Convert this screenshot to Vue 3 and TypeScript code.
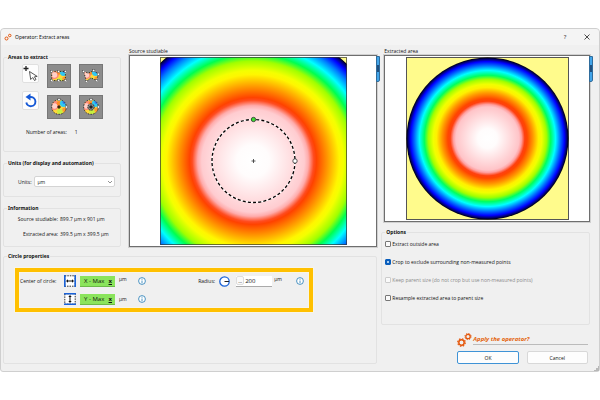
<script setup lang="ts">
import { ref } from 'vue'

interface Stop {
  at: number
  color: string
}

interface Option {
  id: string
  label: string
  checked: boolean
  disabled: boolean
}

const sourceStops: Stop[] = [
  { at: 0, color: '#ffffff' },
  { at: 12, color: '#fffcfc' },
  { at: 38, color: '#ffccd0' },
  { at: 41, color: '#ffacac' },
  { at: 45, color: '#ff4c20' },
  { at: 47, color: '#ff4200' },
  { at: 55, color: '#ff9600' },
  { at: 64, color: '#fff600' },
  { at: 67, color: '#f4ff00' },
  { at: 74, color: '#a0ff00' },
  { at: 79, color: '#00ff50' },
  { at: 85, color: '#00ffff' },
  { at: 91, color: '#0080ff' },
  { at: 96, color: '#0000ff' },
  { at: 99, color: '#000060' },
  { at: 100, color: '#000000' },
]

const resultStops: Stop[] = [
  { at: 0, color: '#ffffff' },
  { at: 12, color: '#fffcfc' },
  { at: 39, color: '#ffc4c8' },
  { at: 42, color: '#ffa0a0' },
  { at: 46, color: '#ff4010' },
  { at: 49, color: '#ff4600' },
  { at: 56, color: '#ff9600' },
  { at: 63, color: '#fff000' },
  { at: 67, color: '#f0ff00' },
  { at: 73, color: '#a0ff00' },
  { at: 78, color: '#00ff60' },
  { at: 84, color: '#00ffff' },
  { at: 90, color: '#0070ff' },
  { at: 95, color: '#0000ff' },
  { at: 98, color: '#000070' },
  { at: 100, color: '#000000' },
]

const options = ref<Option[]>([
  { id: 'outside', label: 'Extract outside area', checked: false, disabled: false },
  { id: 'crop', label: 'Crop to exclude surrounding non-measured points', checked: true, disabled: false },
  { id: 'keep', label: 'Keep parent size (do not crop but use non-measured points)', checked: false, disabled: true },
  { id: 'resample', label: 'Resample extracted area to parent size', checked: false, disabled: false },
])

const shapes = [
  { id: 'rect', label: 'Rectangle', d: 'M4 7H19V17H4Z', dots: [[4, 7], [11.5, 7], [19, 7], [4, 17], [11.5, 17], [19, 17]] },
  { id: 'poly', label: 'Polygon', d: 'M4 7L9 9L15 6L20 10L18 17L12 14L7 18Z', dots: [[4, 7], [15, 6], [20, 10], [18, 17], [7, 18]] },
  { id: 'circle', label: 'Circle', d: 'M12 4A8 8 0 1 1 12 20A8 8 0 1 1 12 4Z', dots: [[12, 4], [20, 12]] },
  { id: 'ring', label: 'Ring', d: 'M12 4A8 8 0 1 1 12 20A8 8 0 1 1 12 4Z', dots: [[12, 4], [20, 12]] },
]

const units = ref('µm')
const radius = ref('200')
</script>

<template>
  <main class="window">
    <header class="titlebar">
      <svg class="title-icon" viewBox="0 0 16 16" aria-hidden="true">
        <circle cx="5" cy="11" r="3" /><circle cx="11.500" cy="5" r="2.500" />
      </svg>
      <h1>Operator: Extract areas</h1>
      <button class="plain help" type="button">?</button>
      <button class="plain" type="button" aria-label="Close">
        <svg class="close" viewBox="0 0 8 8"><path d="M1.500 1.500L6.500 6.500M6.500 1.500L1.500 6.500" /></svg>
      </button>
    </header>

    <div class="body">
      <div class="left">
        <div class="side">
          <fieldset class="areas">
            <legend>Areas to extract</legend>
            <div class="tools">
              <div class="tool-col">
                <button class="tool" type="button" aria-label="Select area">
                  <svg viewBox="0 0 15 17">
                    <path d="M3 1V6M.5 3.500H5.500" stroke="#222" stroke-width="1.300" />
                    <path d="M6.500 6.500L7.700 14.500L9.700 12.500L11.500 15.500L13 14.500L11.400 11.800L14.200 11.400Z" fill="#fff" stroke="#444" stroke-width=".9" />
                  </svg>
                </button>
                <button class="tool" type="button" aria-label="Reset">
                  <svg viewBox="0 0 15 17">
                    <path d="M6 5H8A4.600 4.600 0 1 1 3.300 10.500" fill="none" stroke="#1558d6" stroke-width="1.900" />
                    <path d="M2.500 5L7.500 1.500V8.500Z" fill="#1558d6" />
                  </svg>
                </button>
              </div>
              <div class="shape-grid">
                <button v-for="s in shapes" :key="s.id" class="shape" type="button" :aria-label="s.label">
                  <svg viewBox="0 0 24 24">
                    <defs>
                      <clipPath :id="'clip-' + s.id"><path :d="s.d" /></clipPath>
                    </defs>
                    <g :clip-path="`url(#clip-${s.id})`">
                      <rect width="24" height="24" fill="#ffd83a" />
                      <circle cx="6.500" cy="10" r="5.500" fill="#ff8a78" />
                      <circle cx="7" cy="11" r="3" fill="#ffd0c8" />
                      <circle cx="12" cy="8" r="2.500" fill="#ff8c28" />
                      <circle cx="17" cy="8" r="4" fill="#30c8f0" />
                      <circle cx="18" cy="6.500" r="2.200" fill="#3070f0" />
                      <circle cx="13" cy="17" r="3" fill="#c8f040" />
                      <circle cx="18" cy="15" r="2.500" fill="#ff9a30" />
                    </g>
                    <path :d="s.d" fill="none" stroke="#222" stroke-dasharray="1.500 1.500" />
                    <circle v-if="s.id === 'ring'" cx="12" cy="12" r="3.500" fill="#8c8c8c" stroke="#222" stroke-dasharray="2 1" />
                    <path v-if="s.id === 'circle' || s.id === 'ring'" d="M12 10V14M10 12H14" stroke="#000" stroke-width="1.200" />
                    <rect v-for="([x, y], i) in s.dots" :key="i" :x="x - 1.2" :y="y - 1.2" width="2.400" height="2.400" fill="#fff" stroke="#444" stroke-width=".5" />
                  </svg>
                </button>
              </div>
            </div>
            <p class="count"><span>Number of areas:</span><span>1</span></p>
          </fieldset>

          <fieldset class="units">
            <legend>Units (for display and automation)</legend>
            <div class="unit-row">
              <label for="units">Units:</label>
              <div class="select-wrap">
                <select id="units" v-model="units"><option>µm</option></select>
                <svg class="chevron" viewBox="0 0 6 4"><path d="M1 1L3 3L5 1" /></svg>
              </div>
            </div>
          </fieldset>

          <fieldset class="info">
            <legend>Information</legend>
            <dl>
              <dt>Source studiable:</dt><dd>899.7 µm x 901 µm</dd>
              <dt>Extracted area:</dt><dd>399.5 µm x 399.5 µm</dd>
            </dl>
          </fieldset>
        </div>

        <section class="source">
          <h2>Source studiable</h2>
          <div class="panel">
            <svg class="map" viewBox="0 0 187 188" role="img" aria-label="Source studiable">
              <defs>
                <radialGradient id="source-heat" gradientUnits="userSpaceOnUse" cx="93" cy="104" r="135">
                  <stop v-for="s in sourceStops" :key="s.at" :offset="s.at / 100" :stop-color="s.color" />
                </radialGradient>
              </defs>
              <rect width="187" height="188" fill="#fffb8c" />
              <circle cx="93" cy="104" r="135" fill="url(#source-heat)" />
              <rect x=".5" y=".5" width="186" height="187" fill="none" stroke="#333" stroke-opacity=".7" />
              <circle cx="93.500" cy="104" r="41.500" fill="none" stroke="#fff" stroke-width="1.200" />
              <circle cx="93.500" cy="104" r="41.500" fill="none" stroke="#000" stroke-width="1.300" stroke-dasharray="3 2.210" />
              <path d="M93.500 102V106M91.500 104H95.500" stroke="#333" stroke-width=".8" />
              <circle cx="93.500" cy="62.500" r="2.200" fill="#3edc32" stroke="#333" stroke-width=".8" />
              <circle cx="135" cy="104" r="2.200" fill="#fff" stroke="#333" stroke-width=".8" />
            </svg>
            <span class="tab"></span>
          </div>
        </section>

        <fieldset class="circle-props">
          <legend>Circle properties</legend>
          <div class="highlight">
            <div class="center-fields">
              <span class="field-label">Center of circle:</span>
              <template v-for="axis in ['X', 'Y']" :key="axis">
                <svg class="axis-icon" :class="{ second: axis === 'Y' }" viewBox="0 0 12 12" aria-hidden="true">
                  <rect x=".8" y=".8" width="10.400" height="10.400" fill="#fff" stroke="#333" stroke-dasharray="1.500 1" />
                  <template v-if="axis === 'X'">
                    <path d="M.8 0V12M11.200 0V12" stroke="#1a62d8" stroke-width="1.600" />
                    <path d="M3 6H9" stroke="#111" /><path d="M2 6L4 4.300V7.700ZM10 6L8 4.300V7.700Z" fill="#111" />
                  </template>
                  <template v-else>
                    <path d="M0 .8H12M0 11.200H12" stroke="#1a62d8" stroke-width="1.600" />
                    <path d="M6 3V9" stroke="#111" /><path d="M6 2L4.300 4H7.700ZM6 10L4.300 8H7.700Z" fill="#111" />
                  </template>
                </svg>
                <button class="chip" type="button"><span>{{ axis }} - Max</span><b>x</b></button>
                <span class="unit" :class="{ middle: axis === 'Y' }">µm</span>
                <svg class="info-icon" viewBox="0 0 8 8" aria-hidden="true">
                  <circle cx="4" cy="4" r="3.400" /><path d="M4 3.500V6.200M4 1.800V2.700" />
                </svg>
              </template>
            </div>
            <div class="radius-fields">
              <label for="radius">Radius:</label>
              <svg class="radius-icon" viewBox="0 0 11 11" aria-hidden="true">
                <circle cx="5.500" cy="5.500" r="4.700" fill="#fff" stroke="#1a62d8" stroke-width="1.300" />
                <path d="M5.500 5.500H10" stroke="#222" />
              </svg>
              <div class="number">
                <button type="button" aria-label="More">...</button>
                <input id="radius" v-model="radius" type="text" />
              </div>
              <span class="unit">µm</span>
              <svg class="info-icon" viewBox="0 0 8 8" aria-hidden="true">
                <circle cx="4" cy="4" r="3.400" /><path d="M4 3.500V6.200M4 1.800V2.700" />
              </svg>
            </div>
          </div>
        </fieldset>
      </div>

      <div class="right">
        <section class="result">
          <h2>Extracted area</h2>
          <div class="panel">
            <svg class="map" viewBox="0 0 163 163" role="img" aria-label="Extracted area">
              <defs>
                <radialGradient id="result-heat" gradientUnits="userSpaceOnUse" cx="81.500" cy="81.500" r="81">
                  <stop v-for="s in resultStops" :key="s.at" :offset="s.at / 100" :stop-color="s.color" />
                </radialGradient>
              </defs>
              <rect x=".5" y=".5" width="162" height="162" fill="#fffb8c" stroke="#555" />
              <circle cx="81.500" cy="81.500" r="81" fill="url(#result-heat)" />
            </svg>
            <span class="tab"></span>
          </div>
        </section>

        <fieldset class="options">
          <legend>Options</legend>
          <label v-for="o in options" :key="o.id" class="check" :class="{ off: o.disabled }">
            <input v-model="o.checked" type="checkbox" :disabled="o.disabled" />
            <span>{{ o.label }}</span>
          </label>
        </fieldset>

        <footer class="apply">
          <div class="question">
            <svg class="gears" viewBox="0 0 15 14" aria-hidden="true">
              <g fill="none" stroke="#e4570c">
                <circle cx="4.500" cy="9.500" r="2.700" stroke-width="1.500" />
                <circle cx="4.500" cy="9.500" r="3.800" stroke-width="1.200" stroke-dasharray="1.490 1.490" />
                <circle cx="11" cy="3.500" r="2.200" stroke-width="1.300" />
                <circle cx="11" cy="3.500" r="3.100" stroke-width="1" stroke-dasharray="1.220 1.220" />
              </g>
            </svg>
            <p>Apply the operator?</p>
          </div>
          <div class="actions">
            <button class="ok" type="button">OK</button>
            <button type="button">Cancel</button>
          </div>
        </footer>
      </div>
      <svg class="grip" viewBox="0 0 5 5" aria-hidden="true"><path d="M4 0h1v5H0V4h2V2h2z" /></svg>
    </div>
  </main>
</template>

<style>
body {
  margin: 0;
  background: #fff;
}
</style>

<style scoped>
* {
  box-sizing: border-box;
}

.window {
  position: relative;
  margin-top: 28px;
  border: 1px solid #cfcfcf;
  border-radius: 4px 4px 3px 3px;
  background: #f0f0f0;
  color: #111;
  font: 5px/8px "Open Sans", "Noto Sans", sans-serif;
}

svg {
  display: block;
}

button,
input,
select {
  margin: 0;
  padding: 0;
  color: inherit;
  font: inherit;
}

h1,
h2,
p,
dl,
dd {
  margin: 0;
  font: inherit;
}

.titlebar {
  display: flex;
  align-items: center;
  height: 16px;
  padding: 0 8px 0 3px;
  background: #f4f4f4;
  border-radius: 4px 4px 0 0;
}

.title-icon {
  width: 8px;
  height: 8px;
  fill: none;
  stroke: #e4570c;
  stroke-width: 2;
}

.titlebar h1 {
  flex: 1;
  margin-left: 3px;
  font-family: "Noto Sans", sans-serif;
}

.plain {
  border: 0;
  background: none;
  width: 8px;
}

.help {
  margin-right: 14px;
  font-size: 6px;
}

.close {
  width: 8px;
  height: 8px;
  stroke: #222;
  stroke-width: .8;
}

.body {
  display: grid;
  grid-template-columns: minmax(0, 375fr) minmax(0, 209fr);
  gap: 4px;
  padding: 1px 9px 7px 2px;
}

.left {
  display: grid;
  grid-template-columns: 118px minmax(0, 1fr);
  grid-template-rows: auto 1fr;
  column-gap: 8px;
  row-gap: 5px;
}

fieldset {
  min-width: 0;
  margin: 0;
  padding: 0;
  border: 1px solid #e2e2e2;
  border-radius: 2px;
}

legend {
  margin-left: 3px;
  padding: 0 1px;
  font-family: "Noto Sans", sans-serif;
  font-weight: 700;
}

.side {
  display: flex;
  flex-direction: column;
  justify-content: space-between;
  padding-top: 7px;
}

.areas {
  padding: 3px 0 15px;
}

.tools {
  display: flex;
  gap: 8px;
  padding-left: 18px;
}

.tool-col {
  display: grid;
  align-content: start;
  gap: 8px;
}

.tool {
  width: 17px;
  height: 19px;
  border: 1px solid #e0e0e0;
  border-radius: 2px;
  background: #fdfdfd;
}

.shape-grid {
  display: grid;
  grid-template-columns: 24px 24px;
  gap: 7px 8px;
}

.shape {
  height: 24px;
  border: 1px solid #777;
  background: #8c8c8c;
}

.shape svg {
  width: 22px;
  height: 22px;
}

.count {
  display: flex;
  gap: 8px;
  margin-top: 9px;
  padding-left: 22px;
}

.units {
  padding: 9px 0;
}

.unit-row {
  display: flex;
  align-items: center;
  gap: 3px;
  padding: 0 5px 0 14px;
}

.select-wrap {
  position: relative;
  flex: 1;
}

select {
  display: block;
  width: 100%;
  height: 11px;
  padding-left: 2px;
  border: 1px solid #d4d4d4;
  border-radius: 2px;
  background: #fff;
  appearance: none;
}

.chevron {
  position: absolute;
  top: 4px;
  right: 2px;
  width: 6px;
  height: 4px;
  fill: none;
  stroke: #777;
  stroke-width: .8;
  pointer-events: none;
}

.info {
  padding: 3px 0 8px;
}

dl {
  display: grid;
  grid-template-columns: 42px 1fr;
  gap: 7px 2px;
  padding-left: 12px;
}

dt {
  text-align: right;
  white-space: nowrap;
}

.source,
.result {
  padding-top: 1px;
}

.panel {
  position: relative;
  padding: 1px 0;
  border: 1px solid #6e6e6e;
  outline: 1px solid #d0d0d0;
  background: #fff;
}

.map {
  height: 188px;
  max-width: 100%;
  margin: 0 auto;
}

.result .map {
  height: 163px;
}

.tab {
  position: absolute;
  top: 0;
  right: -4px;
  width: 4px;
  height: 26px;
  border: 1px solid #2f6c9c;
  border-radius: 0 0 2px;
  background: linear-gradient(#42a5ea 33%, #1f5080 33% 62%, #42a5ea 62%);
}

.circle-props {
  grid-column: 1 / -1;
}

.highlight {
  display: flex;
  justify-content: space-between;
  width: 80%;
  margin: 8px 0 49px 11px;
  padding: 3px 5px 3px 1px;
  border: 4px solid #ffc000;
  box-shadow: 0 0 0 1px #f8f5e8, inset 0 0 0 1px #f8f5e8;
}

.center-fields {
  display: grid;
  grid-template-columns: 40px 12px 35px 15px 8px;
  align-items: center;
  gap: 6px 4px;
}

.field-label {
  white-space: nowrap;
}

.axis-icon {
  width: 12px;
  height: 12px;
}

.second {
  grid-column: 2;
}

.chip {
  display: flex;
  align-items: center;
  justify-content: space-between;
  height: 11px;
  padding: 0 3px 0 4px;
  border: 0;
  border-bottom: 1px solid #6cba48;
  background: #8be45c;
  font-size: 6px;
  white-space: nowrap;
}

.chip b {
  text-decoration: underline;
}

.unit {
  align-self: start;
}

.middle {
  align-self: center;
}

.info-icon {
  width: 8px;
  height: 8px;
  fill: #fff;
  stroke: #1f78b4;
  stroke-width: .8;
}

.radius-fields {
  display: flex;
  align-items: center;
  align-self: start;
  height: 12px;
}

.radius-icon {
  width: 11px;
  height: 11px;
  margin: 0 6px 0 4px;
}

.number {
  display: flex;
  align-items: center;
  width: 36px;
  height: 11px;
  margin-right: 2px;
  border-bottom: 1px solid #aaa;
  background: #fff;
}

.number button {
  width: 8px;
  height: 9px;
  border: 1px solid #ddd;
  border-radius: 2px;
  background: #fafafa;
  line-height: 4px;
}

.number input {
  flex: 1;
  min-width: 0;
  height: 8px;
  padding-left: 1px;
  border: 0;
  background: none;
  font-size: 6px;
}

.radius-fields .info-icon {
  margin-left: 14px;
}

.right {
  display: flex;
  flex-direction: column;
}

.result {
  padding-left: 3px;
}

.options {
  display: grid;
  gap: 10px;
  margin-top: 6px;
  padding: 4px 0 22px;
}

.check {
  display: flex;
  align-items: center;
  gap: 1px;
  padding-left: 3px;
  white-space: nowrap;
}

.check input {
  width: 6px;
  height: 6px;
  border: 1px solid #777;
  border-radius: 1px;
  background: #fafafa;
  appearance: none;
}

.check input:checked {
  border-color: #0a5ebc;
  background: radial-gradient(#a8ccf0 1px, #0a5ebc 1px);
}

.off {
  color: #8a8a8a;
}

.off input {
  border-color: #ccc;
}

.apply {
  display: flex;
  flex-direction: column;
  gap: 4px;
  margin-top: 8px;
  padding: 0 2px 0 76px;
}

.question {
  display: flex;
  align-items: start;
  gap: 1px;
}

.gears {
  width: 15px;
  height: 14px;
}

.question p {
  flex: 1;
  height: 12px;
  padding-top: 2px;
  border-bottom: 1px solid #bbb;
  color: #e4640c;
  font-size: 6px;
  font-style: italic;
  font-weight: 700;
}

.actions {
  display: grid;
  grid-template-columns: 1fr 1fr;
  gap: 8px;
}

.actions button {
  height: 13px;
  border: 1px solid #d8d8d8;
  border-radius: 2px;
  background: #fdfdfd;
}

.actions .ok {
  border-color: #3f93d6;
}

.grip {
  position: absolute;
  right: 0;
  bottom: 0;
  width: 5px;
  height: 5px;
  fill: #b8b8b8;
}
</style>
